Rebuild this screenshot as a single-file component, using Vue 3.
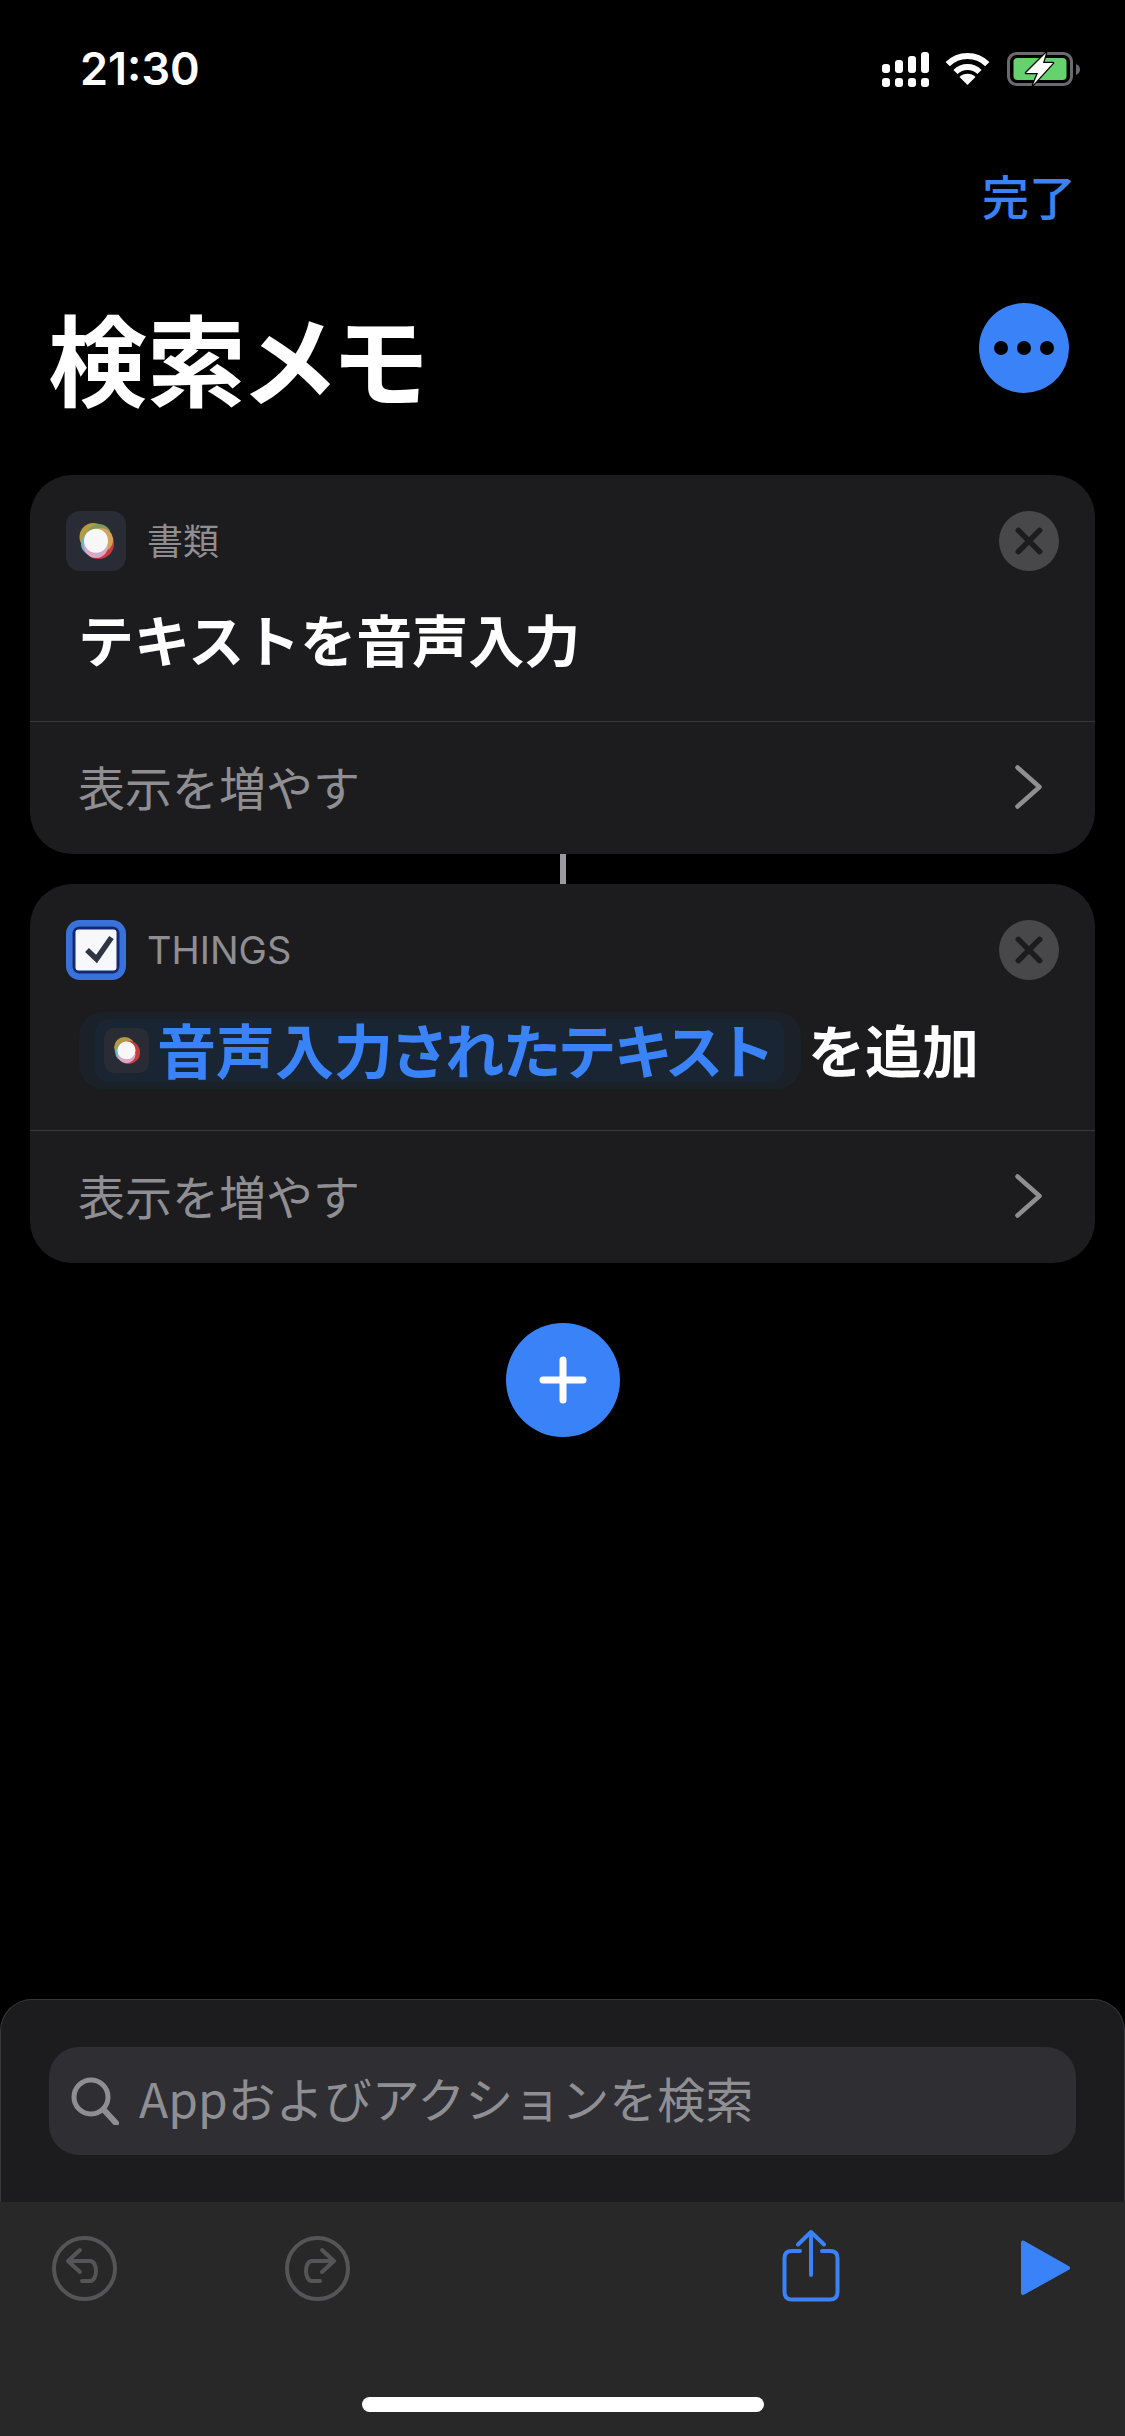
<script setup>
const cards = [
  { id: 'docs', label: '書類' },
  { id: 'things', label: 'THINGS' }
]
</script>

<template>
  <div class="screen">
    <header class="status">
      <span class="time">21:30</span>
      <div class="status-icons">
        <svg class="signal" width="47" height="35" viewBox="0 0 47 35" fill="#fff">
          <rect x="0" y="12" width="8" height="9" rx="3" /><rect x="13" y="8" width="8" height="13" rx="3" /><rect x="26" y="4" width="8" height="17" rx="3" /><rect x="39" y="0" width="8" height="21" rx="3" />
          <rect x="0" y="26" width="8" height="9" rx="3" /><rect x="13" y="26" width="8" height="9" rx="3" /><rect x="26" y="26" width="8" height="9" rx="3" /><rect x="39" y="26" width="8" height="9" rx="3" />
        </svg>
        <svg class="wifi" width="45" height="35" viewBox="0 0 45 35" fill="none" stroke="#fff" stroke-width="6">
          <path d="M2.700 12.200A28 28 0 0 1 42.300 12.200" />
          <path d="M10.500 20A17 17 0 0 1 34.500 20" />
          <path d="M22.500 33L14.500 25A11.300 11.300 0 0 1 30.500 25Z" fill="#fff" stroke="none" />
        </svg>
        <svg class="battery" width="75" height="36" viewBox="0 0 75 36">
          <rect x="1.500" y="1.500" width="63" height="31" rx="8" fill="none" stroke="#6b6b6d" stroke-width="3" />
          <rect x="6.500" y="6" width="53" height="22" rx="4" fill="#65d26e" />
          <path d="M69 12C71.500 13 73 15 73 17.500C73 20 71.500 22 69 23Z" fill="#6b6b6d" />
          <path d="M39 1L19 21H31L26 33L46 11H36Z" fill="#fff" stroke="#000" stroke-width="2.500" stroke-linejoin="round" paint-order="stroke" />
        </svg>
      </div>
    </header>

    <nav class="nav"><span class="done">完了</span></nav>

    <div class="title-row">
      <h1 class="title">検索メモ</h1>
      <div class="more"><i></i><i></i><i></i></div>
    </div>

    <main class="flow">
      <section class="card">
        <div class="card-head">
          <div class="app-icon">
            <svg width="60" height="60" viewBox="0 0 60 60">
              <circle cx="27.500" cy="26" r="14" fill="#b39a45" />
              <circle cx="32.500" cy="32.500" r="15.500" fill="#c93c3c" />
              <circle cx="33" cy="25" r="12" fill="#7f9b5a" />
              <circle cx="35" cy="29" r="12" fill="#d2a35c" />
              <circle cx="26" cy="33" r="11" fill="#63b4cc" />
              <circle cx="30" cy="35" r="12" fill="#d8a8c8" />
              <circle cx="30" cy="29.700" r="12" fill="#f7f7f7" />
            </svg>
          </div>
          <span class="label">{{ cards[0].label }}</span>
          <div class="close">
            <svg width="30" height="30" viewBox="0 0 24 24"><path d="M3.500 3.500L20.500 20.500M20.500 3.500L3.500 20.500" stroke="#1c1c1e" stroke-width="4.500" stroke-linecap="round" /></svg>
          </div>
        </div>
        <div class="card-body"><span class="action">テキストを音声入力</span></div>
        <div class="card-foot">
          <span class="foot-text">表示を増やす</span>
          <svg class="chev" width="27" height="44" viewBox="0 0 27 44"><path d="M2.500 2.500L24.500 22L2.500 41.500" fill="none" stroke="#8e8e93" stroke-width="4.500" stroke-linecap="round" stroke-linejoin="round" /></svg>
        </div>
      </section>

      <div class="connector"></div>

      <section class="card">
        <div class="card-head">
          <div class="things-icon">
            <svg width="60" height="60" viewBox="0 0 60 60">
              <rect width="60" height="60" rx="14" fill="#3a72dc" />
              <rect x="6.500" y="6.500" width="47" height="47" rx="7" fill="#14296e" />
              <rect x="9.500" y="9.500" width="41" height="41" rx="3" fill="#f7f8fc" />
              <path d="M21 30L30.500 39L45.500 17.500" fill="none" stroke="#2f3542" stroke-width="5.500" />
            </svg>
          </div>
          <span class="label label-latin">{{ cards[1].label }}</span>
          <div class="close">
            <svg width="30" height="30" viewBox="0 0 24 24"><path d="M3.500 3.500L20.500 20.500M20.500 3.500L3.500 20.500" stroke="#1c1c1e" stroke-width="4.500" stroke-linecap="round" /></svg>
          </div>
        </div>
        <div class="card-body card-body-pill">
          <div class="pill-halo">
            <div class="pill">
              <div class="mini-icon">
                <svg width="45" height="45" viewBox="0 0 60 60">
                  <circle cx="27.500" cy="26" r="14" fill="#b39a45" />
                  <circle cx="32.500" cy="32.500" r="15.500" fill="#c93c3c" />
                  <circle cx="26" cy="33" r="11" fill="#63b4cc" />
                  <circle cx="30" cy="35" r="12" fill="#d8a8c8" />
                  <circle cx="30" cy="29.700" r="12" fill="#f7f7f7" />
                </svg>
              </div>
              <span class="pill-text">音声入力されたテキスト</span>
            </div>
          </div>
          <span class="action action-tail">を追加</span>
        </div>
        <div class="card-foot">
          <span class="foot-text">表示を増やす</span>
          <svg class="chev" width="27" height="44" viewBox="0 0 27 44"><path d="M2.500 2.500L24.500 22L2.500 41.500" fill="none" stroke="#8e8e93" stroke-width="4.500" stroke-linecap="round" stroke-linejoin="round" /></svg>
        </div>
      </section>

      <div class="add">
        <svg width="48" height="48" viewBox="0 0 48 48"><path d="M24 4V44M4 24H44" stroke="#fff" stroke-width="7" stroke-linecap="round" /></svg>
      </div>
    </main>

    <section class="sheet">
      <div class="search">
        <svg class="search-icon" width="48" height="48" viewBox="0 0 48 48" fill="none" stroke="#8e8e93" stroke-linecap="round">
          <circle cx="20" cy="20" r="17" stroke-width="5" />
          <path d="M32.500 32.500L45 46" stroke-width="6" />
        </svg>
        <span class="search-text">Appおよびアクションを検索</span>
      </div>
    </section>

    <footer class="toolbar">
      <div class="tools">
        <svg class="undo" width="65" height="80" viewBox="0 0 65 80" fill="none" stroke="#555557" stroke-width="4" stroke-linecap="round" stroke-linejoin="round">
          <circle cx="32.500" cy="40.500" r="30.500" />
          <path d="M28 22L16 33L28 44M16 33H38C46 33 46 53 38 53H30" />
        </svg>
        <svg class="redo" width="65" height="80" viewBox="0 0 65 80" fill="none" stroke="#555557" stroke-width="4" stroke-linecap="round" stroke-linejoin="round">
          <circle cx="32.500" cy="40.500" r="30.500" />
          <path d="M37 22L49 33L37 44M49 33H27C19 33 19 53 27 53H35" />
        </svg>
        <svg class="share" width="58" height="80" viewBox="0 0 58 80" fill="none" stroke="#3a82f7" stroke-width="4" stroke-linecap="round" stroke-linejoin="round">
          <path d="M29 5V47M16 16.500L29 4L42 16.500" />
          <path d="M18 23H10C5 23 2.500 25.500 2.500 30V64C2.500 69 5 71.500 10 71.500H48C53 71.500 55.500 69 55.500 64V30C55.500 25.500 53 23 48 23H40" />
        </svg>
        <svg class="play" width="49" height="80" viewBox="0 0 49 80">
          <path d="M2 14.500L47 40L2 65Z" fill="#3a82f7" stroke="#3a82f7" stroke-width="4" stroke-linejoin="round" />
        </svg>
      </div>
      <div class="home"></div>
    </footer>
  </div>
</template>

<style scoped>
.screen {
  width: 1125px;
  height: 2436px;
  display: flex;
  flex-direction: column;
  background: #000;
  overflow: hidden;
  color: #fff;
  font-family: "Noto Sans CJK JP", "Noto Sans", sans-serif;
}
.status {
  height: 137px;
  flex: none;
  display: flex;
  align-items: center;
  justify-content: space-between;
  padding: 0 43px 0 80px;
}
.time {
  font-family: Inter, sans-serif;
  font-size: 45px;
  font-weight: 600;
  line-height: 1;
}
.status-icons { display: flex; align-items: center; padding-top: 2px; }
.wifi { margin-left: 16px; }
.battery { margin-left: 17px; }
.nav {
  height: 124px;
  flex: none;
  display: flex;
  align-items: center;
  justify-content: flex-end;
  padding: 0 49px 10px 0;
  box-sizing: border-box;
}
.done {
  color: #3a82f7;
  font-size: 47px;
  font-weight: 500;
  line-height: 1;
}
.title-row {
  height: 214px;
  flex: none;
  display: flex;
  justify-content: space-between;
  align-items: flex-start;
  padding: 0 56px 0 48px;
}
.title {
  margin: 45px 0 0;
  font-size: 99px;
  font-weight: 700;
  line-height: 100px;
  font-feature-settings: "palt";
}
.more {
  width: 90px;
  height: 90px;
  margin-top: 42px;
  border-radius: 50%;
  background: #3a82f7;
  display: flex;
  align-items: center;
  justify-content: center;
  gap: 9px;
}
.more i {
  width: 14px;
  height: 14px;
  border-radius: 50%;
  background: #000;
}
.flow {
  flex: 1;
  min-height: 0;
  display: flex;
  flex-direction: column;
  padding: 0 30px;
}
.card {
  background: #1c1c1e;
  border-radius: 42px;
  flex: none;
}
.card-head {
  display: flex;
  align-items: center;
  height: 60px;
  padding: 36px 36px 0 36px;
  box-sizing: content-box;
}
.app-icon {
  width: 60px;
  height: 60px;
  border-radius: 14px;
  background: #2a2c35;
  flex: none;
}
.things-icon { width: 60px; height: 60px; flex: none; }
.app-icon svg, .things-icon svg, .mini-icon svg { display: block; }
.label {
  margin-left: 21px;
  margin-bottom: 5px;
  font-size: 36px;
  color: #8e8e93;
  line-height: 1;
}
.label-latin {
  margin-bottom: 0;
  font-size: 38px;
  font-family: Inter, sans-serif;
}
.close {
  margin-left: auto;
  width: 60px;
  height: 60px;
  border-radius: 50%;
  background: #48484a;
  display: flex;
  align-items: center;
  justify-content: center;
}
.card-body {
  height: 150px;
  display: flex;
  align-items: center;
  padding: 0 0 16px 48px;
  box-sizing: border-box;
}
.card-body-pill { padding: 0 0 10px 49px; }
.action {
  font-size: 56px;
  font-weight: 700;
  line-height: 1;
}
.action-tail {
  margin-left: 7px;
  margin-bottom: 4px;
  font-size: 57px;
}
.pill-halo {
  padding: 7px 17px 7px 16px;
  background: #1b2128;
  border-radius: 24px;
}
.pill {
  display: flex;
  align-items: center;
  height: 63px;
  padding: 0 12px 0 9px;
  background: #1a2533;
  border-radius: 14px;
}
.mini-icon {
  width: 45px;
  height: 45px;
  border-radius: 10px;
  background: #2a2c35;
  flex: none;
}
.pill-text {
  margin-left: 8px;
  margin-bottom: 4px;
  color: #3a82f7;
  font-size: 59px;
  font-weight: 700;
  line-height: 1;
  font-feature-settings: "palt";
}
.card-foot {
  height: 132px;
  border-top: 1px solid #38383a;
  box-sizing: content-box;
  display: flex;
  align-items: center;
  justify-content: space-between;
  padding: 0 53px 0 48px;
}
.foot-text {
  font-size: 47px;
  color: #8e8e93;
  line-height: 1;
  margin-bottom: 5px;
}
.chev { margin-bottom: 2px; }
.connector {
  width: 6px;
  height: 30px;
  background: #9a9aa0;
  align-self: center;
  flex: none;
}
.add {
  width: 114px;
  height: 114px;
  margin-top: 60px;
  border-radius: 50%;
  background: #3a82f7;
  align-self: center;
  display: flex;
  align-items: center;
  justify-content: center;
  flex: none;
}
.sheet {
  height: 203px;
  flex: none;
  box-sizing: border-box;
  padding: 47px 48px 0;
  background: #1c1c1e;
  border: 1px solid #38383a;
  border-bottom: 0;
  border-radius: 32px 32px 0 0;
}
.search {
  height: 108px;
  background: #2e2e33;
  border-radius: 30px;
  display: flex;
  align-items: center;
  padding-left: 22px;
}
.search-text {
  margin-left: 20px;
  margin-bottom: 8px;
  font-size: 48px;
  color: #8e8e93;
  line-height: 1;
}
.toolbar {
  height: 234px;
  flex: none;
  background: #282828;
  display: flex;
  flex-direction: column;
}
.tools {
  display: flex;
  align-items: flex-start;
  padding: 26px 55px 0 52px;
}
.redo { margin-left: 168px; }
.share { margin-left: auto; }
.play { margin-left: 181px; }
.home {
  width: 402px;
  height: 15px;
  margin: auto 0 24px;
  align-self: center;
  background: #fff;
  border-radius: 8px;
}
</style>

<style>
html, body { background: #000; }
</style>
